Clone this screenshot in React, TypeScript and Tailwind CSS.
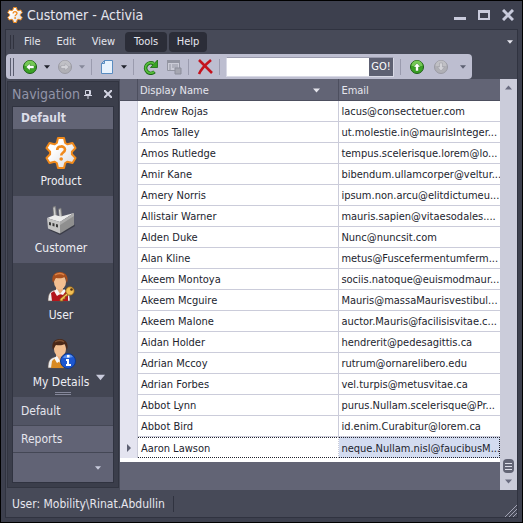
import React from "react";

const customers: [string, string][] = [
  ["Andrew Rojas", "lacus@consectetuer.com"],
  ["Amos Talley", "ut.molestie.in@maurisInteger..."],
  ["Amos Rutledge", "tempus.scelerisque.lorem@lo..."],
  ["Amir Kane", "bibendum.ullamcorper@veltur..."],
  ["Amery Norris", "ipsum.non.arcu@elitdictumeu..."],
  ["Allistair Warner", "mauris.sapien@vitaesodales...."],
  ["Alden Duke", "Nunc@nuncsit.com"],
  ["Alan Kline", "metus@Fuscefermentumferm..."],
  ["Akeem Montoya", "sociis.natoque@euismodmaur..."],
  ["Akeem Mcguire", "Mauris@massaMaurisvestibul..."],
  ["Akeem Malone", "auctor.Mauris@facilisisvitae.c..."],
  ["Aidan Holder", "hendrerit@pedesagittis.ca"],
  ["Adrian Mccoy", "rutrum@ornarelibero.edu"],
  ["Adrian Forbes", "vel.turpis@metusvitae.ca"],
  ["Abbot Lynn", "purus.Nullam.scelerisque@Pr..."],
  ["Abbot Bird", "id.enim.Curabitur@lorem.ca"],
  ["Aaron Lawson", "neque.Nullam.nisl@faucibusM..."],
];

const gearPath =
  "M13 1h6l1.2 5 2.3 1.3L27.500 6l3 5-3.600 3.700v2.600l3.600 3.700-3 5-5-1.300-2.300 1.300L19 31h-6l-1.200-5-2.300-1.300-5 1.300-3-5 3.600-3.700v-2.600L1.500 11l3-5 5 1.300L11.800 6z";

function Gear({ className }: { className: string }) {
  return (
    <svg viewBox="0 0 32 32" className={className} aria-hidden="true">
      <defs>
        <linearGradient id="gearFill" x1="0" y1="0" x2="1" y2="1">
          <stop offset="0.3" stopColor="#fff" />
          <stop offset="1" stopColor="#d9d9dc" />
        </linearGradient>
      </defs>
      <path d={gearPath} fill="url(#gearFill)" stroke="#f08a1c" strokeWidth="2" strokeLinejoin="round" />
      <path d="M12.200 13c0-4.800 7.800-4.600 7.800-.4 0 3-3.800 2.800-3.800 6" fill="none" stroke="#f08a1c" strokeWidth="2.600" />
      <circle cx="16.200" cy="22" r="1.800" fill="#f08a1c" />
    </svg>
  );
}

function Factory() {
  return (
    <svg viewBox="0 0 32 32" className="h-8 w-8" aria-hidden="true">
      <path d="M4 26l11 5 15-9-1-2z" fill="#3a3c47" />
      <path d="M8 3l2.500-1 1.500 12H8.500zM13.500 5l2.500-1 1.200 9h-3z" fill="#a9a9a9" stroke="#6f6f6f" strokeWidth=".6" />
      <path d="M9 4l1 9M14.500 6l.8 7" stroke="#dedede" strokeWidth=".8" />
      <path d="M2 14l8-3 6 1.500L29 9 15 18z" fill="#ececec" />
      <path d="M2 14l13 4v11.500L3 24.500z" fill="#c4c4c4" />
      <path d="M15 18l14-9v12l-14 8.500z" fill="#8f8f8f" />
      <path d="M15 18l14-9v3l-14 9z" fill="#ababab" />
      <path d="M4 18l2 .6v3L4 21zM7.500 19l2 .6v3l-2-.6zM11 20l2 .6v3l-2-.6z" fill="#3b3b3b" />
    </svg>
  );
}

function Person({ kind }: { kind: "key" | "info" }) {
  const key = kind === "key";
  return (
    <svg viewBox="0 0 32 32" className="h-8 w-8" aria-hidden="true">
      <path d="M3 30c0-7 2-10 7-11h8c5 1 7 4 7 11z" fill="#eee" stroke="#67564e" strokeWidth=".6" />
      <path d={key ? "M7 30l-1-8 5-3 4 4 4-4 4 3v8z" : "M6 30l1-7 4-4 4 6 4-5 3 10z"} fill={key ? "#b3151d" : "#d98a22"} />
      <path d="M11 16h7v4l-3 4-4-4z" fill="#e9ad7c" />
      <path d="M9 20l3-2 3 5 4-5 2 2-3 4-3-1-3 2z" fill="#f7f7f7" />
      <ellipse cx="15" cy="11" rx="6" ry="7.500" fill="#f3bf91" />
      <path d="M8 12C6 5 9 1 15 1s9 5 7 11c-1-2-1-4-2-6-4 2-7 1-9 1-1 1-2 3-3 5z" fill={key ? "#a94f1d" : "#4b2817"} />
      <path d="M10 4c3-2 7-2 9 0" stroke={key ? "#dc8347" : "#7d5033"} strokeWidth="1.500" fill="none" />
      {key ? (
        <g>
          <path d="M23 21l-8 7v2h3v-2h2v-2l5-3" fill="#f3c054" stroke="#8b5a13" strokeWidth=".8" />
          <circle cx="25" cy="20" r="4.200" fill="#f3c054" stroke="#8b5a13" strokeWidth=".8" />
          <circle cx="26.500" cy="18.500" r="1.300" fill="#563411" />
        </g>
      ) : (
        <g>
          <circle cx="23" cy="23" r="7.500" fill="#1d57d0" stroke="#123987" />
          <path d="M18 20c1-4 8-5 10-1-3 1-6 1-10 1z" fill="#5b90ee" />
          <path d="M21 21h3v5h2v2h-5v-2h1v-3h-1zM22 17h2.500v2.500H22z" fill="#fff" />
        </g>
      )}
    </svg>
  );
}

function RoundArrow({ turn, on }: { turn: string; on: boolean }) {
  return (
    <svg viewBox="0 0 16 16" className="size-4" aria-hidden="true">
      <circle cx="8" cy="8" r="6.500" fill={on ? "#3aa324" : "#b0b0b6"} stroke={on ? "#1d5d16" : "#9a9aa3"} />
      <path d="M2.500 7a5.500 5.500 0 0111 0z" fill={on ? "#74c855" : "#c0c0c5"} />
      <path
        transform={turn}
        d="M4 8l4-3.500v2h4v3H8v2z"
        fill={on ? "#fff" : "#d3d3d8"}
        stroke={on ? "#2b7d1e" : "#9a9aa3"}
        strokeWidth=".5"
      />
    </svg>
  );
}

function Caret({ className }: { className: string }) {
  return (
    <svg viewBox="0 0 10 6" className={className} aria-hidden="true">
      <path d="M0 0h10L5 6z" fill="currentColor" />
    </svg>
  );
}

function Separator() {
  return <span className="h-4 w-px shrink-0 bg-[#9a9bae]" />;
}

function Grip({ className }: { className: string }) {
  return <span className={`w-1 shrink-0 border-x ${className}`} />;
}

function NavItem({ label, active, children }: { label: string; active?: boolean; children: React.ReactNode }) {
  return (
    <button
      className={`flex h-[67px] w-full flex-col items-center justify-center gap-1 pr-1 text-xs leading-4 text-[#eeeef4] ${
        active ? "bg-[#565869]" : ""
      }`}
    >
      {children}
      <span>{label}</span>
    </button>
  );
}

export default function App() {
  return (
    <div className="flex h-screen w-full flex-col border border-black bg-[#3d404e] px-1 pb-1 font-['DejaVu_Sans_Condensed','DejaVu_Sans',sans-serif] text-[11px] leading-4 text-[#e6e6ee]">
      <header className="flex h-7 shrink-0 items-center pr-1 pl-0.5">
        <Gear className="h-4 w-4" />
        <h1 className="ml-1 flex-1 text-sm">Customer - Activia</h1>
        <div className="flex items-center gap-3 text-[#c9cbdc]">
          <button aria-label="Minimize">
            <svg viewBox="0 0 12 12" className="size-3"><path d="M0 8h12v3H0z" fill="currentColor" /></svg>
          </button>
          <button aria-label="Maximize">
            <svg viewBox="0 0 12 12" className="size-3"><path d="M0 1h12v10H0zM2 4v5h8V4z" fill="currentColor" fillRule="evenodd" /></svg>
          </button>
          <button aria-label="Close">
            <svg viewBox="0 0 12 12" className="size-3"><path d="M1 1l10 10M11 1L1 11" stroke="currentColor" strokeWidth="3" /></svg>
          </button>
        </div>
      </header>

      <div className="flex min-h-0 flex-1 flex-col border border-[#303340] bg-[#474a58]">
        <nav className="flex h-6 shrink-0 items-center pr-1 pl-1" aria-label="Menu">
          <Grip className="h-3.5 border-[#30323e]" />
          <div className="ml-1 flex flex-1">
            <button className="h-5 px-1.5">File</button>
            <button className="ml-1 h-5 px-1.5">Edit</button>
            <button className="ml-1 h-5 px-1.5">View</button>
            <button className="ml-1 h-5 w-[42px] rounded-sm bg-[#2b2d38]">Tools</button>
            <button className="ml-0.5 h-5 w-[38px] rounded-sm bg-[#2b2d38]">Help</button>
          </div>
          <button aria-label="Menu options"><Caret className="h-1 w-1.5" /></button>
        </nav>

        <div className="mr-[45px] flex h-[25px] shrink-0 items-center rounded bg-[#bdbed0] pl-1 text-[#20222c]">
          <Grip className="h-[18px] border-[#5b5e70]" />
          <button aria-label="Back" className="ml-2"><RoundArrow turn="" on /></button>
          <button aria-label="Back history" className="ml-1.5"><Caret className="h-1 w-1.5" /></button>
          <button aria-label="Forward" className="ml-[7px]"><RoundArrow turn="rotate(180 8 8)" on={false} /></button>
          <button aria-label="Forward history" className="mr-1.5 ml-1.5 text-[#86889a]"><Caret className="h-1 w-1.5" /></button>
          <Separator />
          <button aria-label="New" className="ml-[7px]">
            <svg viewBox="0 0 16 16" className="size-4">
              <path d="M5.500 1.500h8v13h-11v-10z" fill="#e8f2fd" stroke="#5a8cc0" />
              <path d="M2.500 4.500h3v-3z" fill="#bdd7f1" stroke="#5a8cc0" />
            </svg>
          </button>
          <button aria-label="New options" className="mr-1.5 ml-1.5"><Caret className="h-1 w-1.5" /></button>
          <Separator />
          <button aria-label="Refresh" className="ml-2">
            <svg viewBox="0 0 16 16" className="size-4">
              <path d="M11.500 4.600A5.200 5.200 0 1012.500 12.800" fill="none" stroke="#1a6812" strokeWidth="3.600" />
              <path d="M15.500 1v7.500H8.500z" fill="#37a322" stroke="#1a6812" strokeWidth=".8" />
              <path d="M12 4.800A5.200 5.200 0 1012 12.900" fill="none" stroke="#55bd3b" strokeWidth="2" />
            </svg>
          </button>
          <button aria-label="Edit list" className="mr-1.5 ml-2">
            <svg viewBox="0 0 16 16" className="size-4">
              <path d="M1.500 1.500h12v10h-12z" fill="#cbccd7" stroke="#9395a2" />
              <path d="M1 1h13v3H1z" fill="#9395a2" />
              <path d="M3 6h2M6 6h6M3 8h2M6 8h6M3 10h2" stroke="#9395a2" />
              <path d="M9 9h6v6H9z" fill="#a5a6b1" stroke="#8b8d9a" />
            </svg>
          </button>
          <Separator />
          <button aria-label="Delete" className="mr-1.5 ml-2">
            <svg viewBox="0 0 16 16" className="size-4">
              <path d="M2 1c4 4 8 8 13 13M14 1C8 6 4 10 2 15" fill="none" stroke="#c4131e" strokeWidth="2.600" />
            </svg>
          </button>
          <Separator />
          <form className="ml-1.5 flex h-5 min-w-0 flex-1 border border-[#d8d9e5] border-t-[#9a9bae]">
            <input aria-label="Search" className="w-0 min-w-0 flex-1 bg-white px-1 outline-none" />
            <button type="button" className="w-6 bg-[#5d6072] text-white">GO!</button>
          </form>
          <span className="w-1.5" />
          <Separator />
          <button aria-label="Up" className="ml-2"><RoundArrow turn="rotate(90 8 8)" on /></button>
          <button aria-label="Down" className="ml-2"><RoundArrow turn="rotate(270 8 8)" on={false} /></button>
          <button aria-label="Toolbar options" className="mr-1.5 ml-[11px] text-[#5d6072]"><Caret className="h-1 w-1.5" /></button>
        </div>

        <div className="flex min-h-0 flex-1">
          <aside className="mx-px my-0.5 flex w-[112px] shrink-0 flex-col border border-[#323541] bg-[#3b3e4b] px-1 pb-1">
            <div className="flex h-6 shrink-0 items-center">
              <h2 className="flex-1 text-sm text-[#9294a8]">Navigation</h2>
              <button aria-label="Pin" className="mr-3 text-[#d3d4e2]">
                <svg viewBox="0 0 8 9" className="h-[9px] w-2"><path d="M1.500 .5h5v4h-5zM0 5.500h8M4 5v4M5.500 1v4" fill="none" stroke="currentColor" /></svg>
              </button>
              <button aria-label="Close panel" className="mr-0.5 text-[#d3d4e2]">
                <svg viewBox="0 0 8 8" className="size-2"><path d="M0 0l8 8M8 0L0 8" stroke="currentColor" strokeWidth="2" /></svg>
              </button>
            </div>
            <div className="flex min-h-0 flex-1 flex-col border border-[#303340] bg-[#434653]">
              <h3 className="h-[22px] shrink-0 bg-[#626475] px-2 text-xs leading-[22px] font-bold text-[#dcdde8]">Default</h3>
              <div className="relative min-h-0 flex-1 overflow-hidden">
                <NavItem label="Product"><Gear className="h-8 w-8" /></NavItem>
                <NavItem label="Customer" active><Factory /></NavItem>
                <NavItem label="User"><Person kind="key" /></NavItem>
                <NavItem label="My Details"><Person kind="info" /></NavItem>
                <button aria-label="More items" className="absolute right-2 bottom-4 text-[#c9cbdc]"><Caret className="h-[7px] w-[9px]" /></button>
                <span className="absolute bottom-0.5 left-1/2 h-[3px] w-4 -translate-x-1/2 border-y border-[#85879a]" />
              </div>
              <button className="h-7 shrink-0 bg-[#515464] px-2 text-left text-xs">Default</button>
              <button className="h-7 shrink-0 border-y border-[#444755] bg-[#616375] px-2 text-left text-xs">Reports</button>
              <div className="flex h-[29px] shrink-0 items-center justify-end bg-[#616375] pr-3 text-[#c9cbdc]">
                <button aria-label="Configure"><Caret className="h-1 w-1.5" /></button>
              </div>
            </div>
          </aside>

          <main className="flex min-w-0 flex-1 bg-[#626475]">
            <div className="min-w-0 flex-1">
              <table className="w-full table-fixed border-separate border-spacing-0 border-b-4 border-white text-[#22242e]">
                <colgroup>
                  <col className="w-[18px]" />
                  <col className="w-[53%]" />
                  <col />
                </colgroup>
                <thead>
                  <tr className="h-[22px] bg-[#626475] text-left text-[#e6e6ee]">
                    <th className="border-r border-b border-[#4d4f5f] p-0" />
                    <th className="border-r border-b border-[#4d4f5f] px-0.5 pt-0.5 pb-0 font-normal">
                      <div className="flex items-center justify-between pr-4">
                        Display Name
                        <Caret className="h-[5px] w-[7px]" />
                      </div>
                    </th>
                    <th className="border-b border-[#4d4f5f] px-0.5 pt-0.5 pb-0 font-normal">Email</th>
                  </tr>
                </thead>
                <tbody>
                  {customers.map(([name, email], i) => {
                    const current = i === customers.length - 1;
                    const edge = current ? "border-b border-dotted border-t border-y-[#22242e]" : "border-b border-b-[#cbccda]";
                    return (
                      <tr key={name} className="h-[21px] bg-white">
                        <td className="border-r border-[#cbccda] bg-[#e4e4f0] p-0">
                          {current && (
                            <svg viewBox="0 0 4 8" className="ml-[7px] h-2 w-1"><path d="M0 0l4 4-4 4z" fill="#5d6072" /></svg>
                          )}
                        </td>
                        <td className={`overflow-hidden border-r border-r-[#cbccda] px-[3px] pt-0.5 pb-0 whitespace-nowrap ${edge}`}>{name}</td>
                        <td className={`overflow-hidden pt-0.5 pr-0 pb-0 pl-0.5 whitespace-nowrap ${edge} ${current ? "border-r border-r-[#22242e] bg-[#d3dcf0]" : ""}`}>{email}</td>
                      </tr>
                    );
                  })}
                </tbody>
              </table>
            </div>
            <div className="flex w-[17px] shrink-0 flex-col items-center bg-[#cbccda] text-[#6a6c80]">
              <button aria-label="Scroll up" className="mt-1.5 rotate-180"><Caret className="h-[5px] w-[7px]" /></button>
              <div className="flex-1" />
              <div className="flex h-3.5 w-[11px] flex-col items-center justify-center gap-0.5 rounded-sm bg-[#626475]">
                <span className="h-px w-[7px] bg-[#dcdde8]" />
                <span className="h-px w-[7px] bg-[#dcdde8]" />
                <span className="h-px w-[7px] bg-[#dcdde8]" />
              </div>
              <button aria-label="Scroll down" className="my-1.5"><Caret className="h-[5px] w-[7px]" /></button>
            </div>
          </main>
        </div>

        <footer className="flex h-[27px] shrink-0 items-center pl-1.5 text-xs">
          <span>User: Mobility\Rinat.Abdullin</span>
          <span className="ml-2 h-4 w-px bg-[#303340]" />
          <svg viewBox="0 0 12 12" className="ml-auto size-3 self-end" aria-hidden="true">
            <path d="M0 12L12 0M4 12l8-8M8 12l4-4" stroke="#a1a3b4" />
          </svg>
        </footer>
      </div>
    </div>
  );
}
